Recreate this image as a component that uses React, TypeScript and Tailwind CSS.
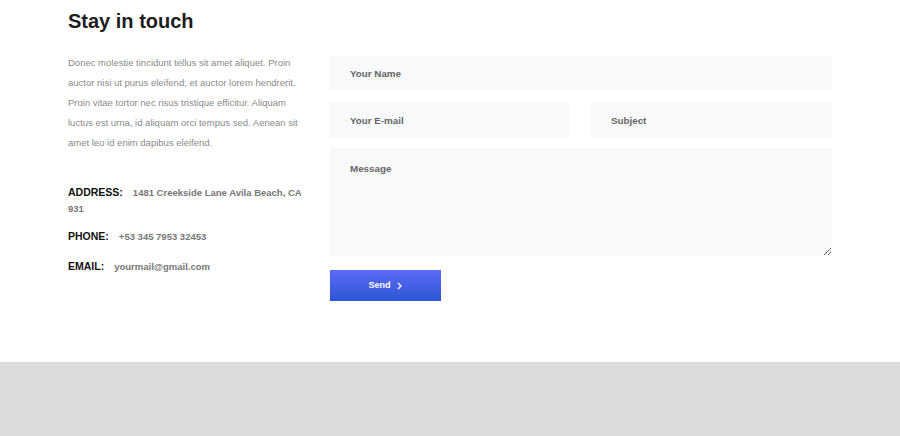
import React from "react";

export default function App() {
  return (
    <div className="w-[900px] h-[436px] bg-white flex flex-col" style={{ fontFamily: '"Liberation Sans", Arial, sans-serif' }}>
      <div className="h-[362px] pl-[68px] pr-[68px] pt-[8px]">
        <h2 className="text-[20px] leading-[26px] font-bold text-[#1d1d1d]">Stay in touch</h2>
        <div className="flex mt-[20px]">
          <div className="w-[242px] mr-[20px]">
            <p className="text-[9.5px] leading-[20px] text-[#8a8a8a] -mt-[1px]">
              Donec molestie tincidunt tellus sit amet aliquet. Proin auctor nisi ut purus eleifend, et auctor lorem hendrerit. Proin vitae tortor nec risus tristique efficitur. Aliquam luctus est urna, id aliquam orci tempus sed. Aenean sit amet leo id enim dapibus eleifend.
            </p>
            <div className="mt-[31px] flex flex-col">
              <p className="text-[9.5px] leading-[16px] font-bold text-[#777]">
                <span className="text-[10.5px] text-[#111] mr-[10px]">ADDRESS:</span>1481 Creekside Lane Avila Beach, CA 931
              </p>
              <p className="mt-[11px] text-[9.5px] leading-[16px] font-bold text-[#777]">
                <span className="text-[10.5px] text-[#111] mr-[10px]">PHONE:</span>+53 345 7953 32453
              </p>
              <p className="mt-[13px] text-[9.5px] leading-[16px] font-bold text-[#777]">
                <span className="text-[10.5px] text-[#111] mr-[10px]">EMAIL:</span>yourmail@gmail.com
              </p>
            </div>
          </div>
          <div className="w-[502px] flex flex-col mt-[2px]">
            <input
              placeholder="Your Name"
              className="h-[34px] bg-[#f8f9fb] pl-[20px] text-[9.8px] font-bold text-[#666] placeholder:text-[#666] outline-none"
            />
            <div className="flex gap-[21px] mt-[13px]">
              <input
                placeholder="Your E-mail"
                className="w-[240px] h-[34px] bg-[#f8f9fb] pl-[20px] text-[9.8px] font-bold text-[#666] placeholder:text-[#666] outline-none"
              />
              <input
                placeholder="Subject"
                className="flex-1 min-w-0 h-[34px] bg-[#f8f9fb] pl-[20px] text-[9.8px] font-bold text-[#666] placeholder:text-[#666] outline-none"
              />
            </div>
            <textarea
              placeholder="Message"
              className="mt-[11px] h-[108px] bg-[#f8f9fb] pl-[20px] pt-[14px] text-[9.8px] font-bold text-[#666] placeholder:text-[#666] outline-none"
            />
            <button className="mt-[14px] w-[111px] h-[31px] bg-gradient-to-b from-[#5b69f7] to-[#2d57d6] text-white text-[9px] font-bold flex items-center justify-center gap-[5px]">
              Send
              <svg width="7" height="8" viewBox="0 0 7 8" fill="none" stroke="white" strokeWidth="1.4">
                <path d="M2 1 L5 4 L2 7" />
              </svg>
            </button>
          </div>
        </div>
      </div>
      <div className="flex-1 bg-[#dcdcdc]" />
    </div>
  );
}
